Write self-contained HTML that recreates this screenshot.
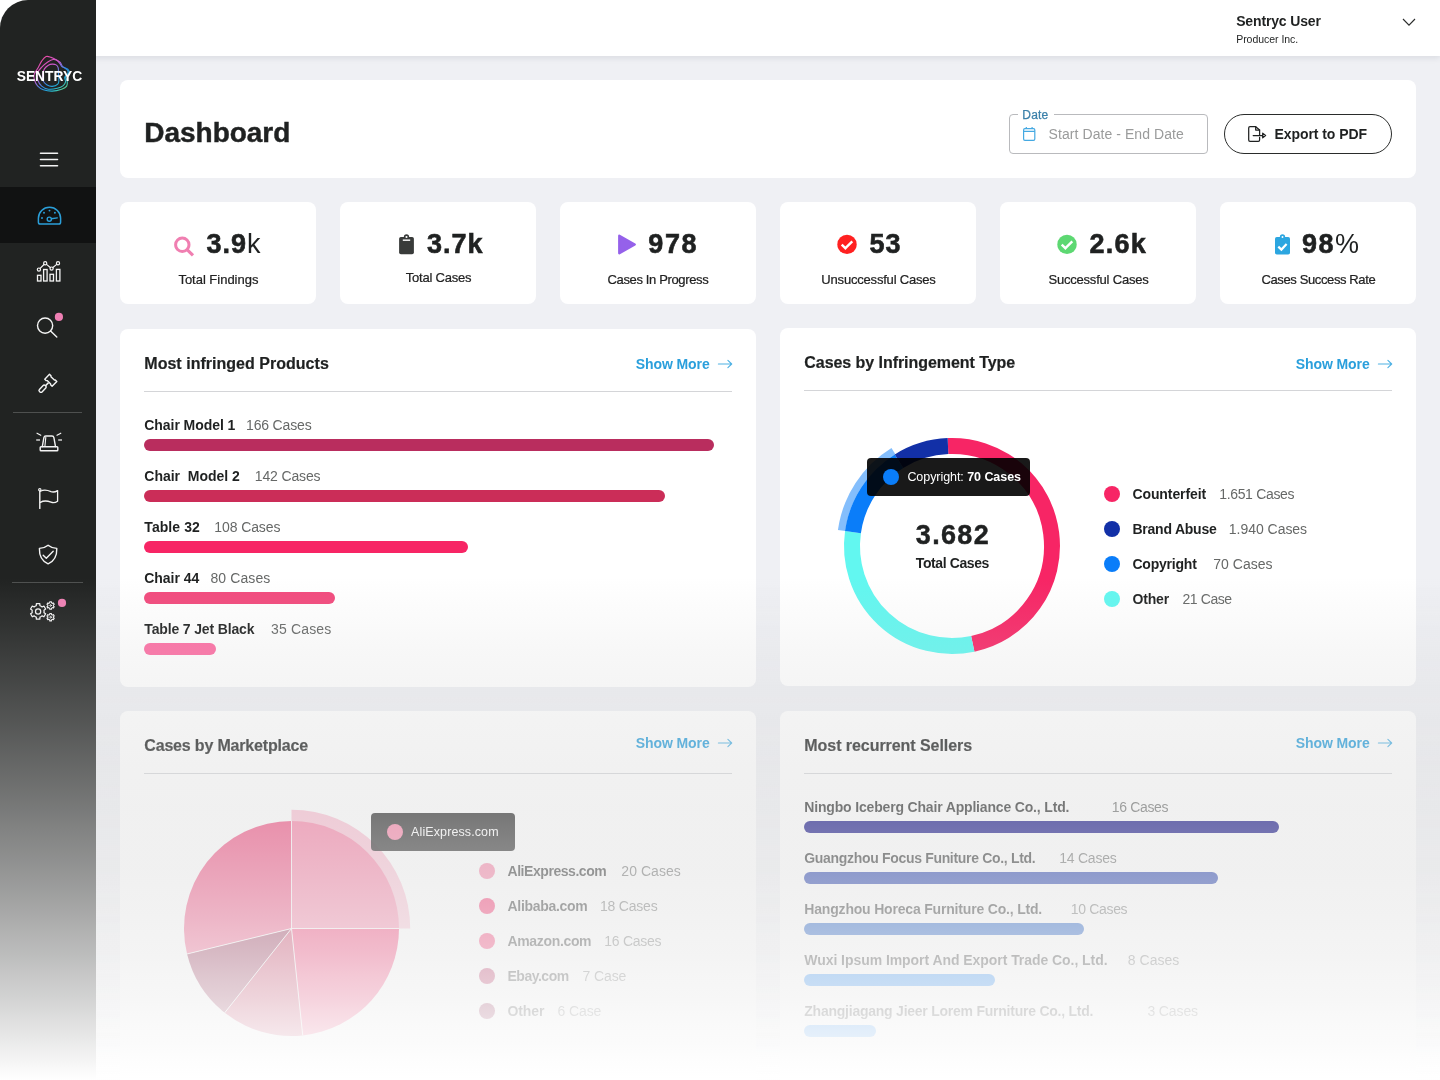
<!DOCTYPE html>
<html lang="en"><head><meta charset="utf-8"><title>Dashboard</title>
<style>
html,body{margin:0;padding:0}
body{width:1440px;height:1080px;overflow:hidden;position:relative;background:#eff0f4;font-family:"Liberation Sans",sans-serif;color:#1f2121}
.t{position:absolute;line-height:1;white-space:nowrap}
.b{position:absolute;box-sizing:border-box}
.card{background:#fff;border-radius:8px}
svg{position:absolute;overflow:visible}
b{font-weight:700}
.g{color:#6b6b6b;font-weight:400}
</style></head><body>
<div id="app" style="position:absolute;left:0;top:0;width:1440px;height:1080px;will-change:transform">

<div class="b" style="left:0px;top:0px;width:1440px;height:56px;background:#fff;box-shadow:0 2px 6px rgba(30,35,60,.10)"></div>
<div class="t" style="left:1236.2px;top:14.35px;font-size:14px;font-weight:700;color:#1f2121;letter-spacing:-0.157px;">Sentryc User</div>
<div class="t" style="left:1236.2px;top:34.11px;font-size:10.5px;font-weight:400;color:#1f2121;letter-spacing:-0.035px;">Producer Inc.</div>
<svg style="left:1402px;top:18px" width="14" height="9" viewBox="0 0 14 9"><path d="M1 1 L7 7.2 L13 1" fill="none" stroke="#2a2c2b" stroke-width="1.15"/></svg>
<div class="b" style="left:0px;top:0px;width:96px;height:1080px;background:#212322;border-top-left-radius:28px"></div>
<div class="b" style="left:0px;top:187px;width:96px;height:56px;background:#111212"></div>
<div class="b" style="left:13px;top:412px;width:69px;height:1px;background:#4e504f"></div>
<div class="b" style="left:12px;top:582px;width:71px;height:1px;background:#4e504f"></div>
<svg style="left:0;top:0" width="96" height="660" viewBox="0 0 96 660" fill="none" stroke-linecap="round" stroke-linejoin="round">
<defs><linearGradient id="lg" x1="38" y1="58" x2="64" y2="90" gradientUnits="userSpaceOnUse">
<stop offset="0" stop-color="#f0479c"/><stop offset=".38" stop-color="#c85ad0"/><stop offset=".62" stop-color="#2e8be6"/><stop offset=".82" stop-color="#20b5d8"/><stop offset="1" stop-color="#5fd08a"/></linearGradient></defs>
<path d="M46.11,56.56 C47.84,55.87 49.28,56.81 51.11,57.39 C52.94,57.97 54.43,58.79 56.11,59.72 C57.79,60.66 59.06,61.23 60.28,62.50 C61.50,63.77 61.40,65.44 62.78,66.67 C64.15,67.89 66.64,68.05 67.78,69.17 C68.92,70.29 69.41,71.40 69.00,72.78 C68.59,74.15 65.88,75.14 65.56,76.67 C65.23,78.19 67.02,79.38 67.22,81.11 C67.43,82.84 67.69,84.63 66.67,86.11 C65.65,87.59 64.31,88.25 61.67,89.17 C59.02,90.08 55.58,91.01 52.22,91.11 C48.86,91.21 45.98,90.64 43.33,89.72 C40.69,88.81 39.41,87.89 37.78,86.11 C36.15,84.33 35.11,82.14 34.44,80.00 C33.78,77.86 33.56,76.58 34.17,74.44 C34.78,72.31 36.40,70.78 37.78,68.33 C39.15,65.89 40.14,63.27 41.67,61.11 C43.19,58.95 44.38,57.24 46.11,56.56Z" stroke="url(#lg)" stroke-width="1.1" fill="none"/>
<path d="M53.06,59.44 C54.79,59.19 55.90,59.69 57.22,60.56 C58.55,61.42 59.41,63.05 60.28,64.17 C61.14,65.29 61.08,65.90 61.94,66.67 C62.81,67.43 63.93,67.62 65.00,68.33 C66.07,69.05 67.27,69.54 67.78,70.56 C68.29,71.57 68.34,72.67 67.78,73.89 C67.22,75.11 65.13,75.80 64.72,77.22 C64.31,78.65 65.81,80.14 65.56,81.67 C65.30,83.19 64.86,84.33 63.33,85.56 C61.81,86.78 59.97,87.67 57.22,88.33 C54.47,89.00 51.19,89.57 48.33,89.17 C45.48,88.76 43.60,87.79 41.67,86.11 C39.73,84.43 38.54,82.44 37.78,80.00 C37.01,77.56 36.69,75.22 37.50,72.78 C38.31,70.33 40.34,68.65 42.22,66.67 C44.11,64.68 45.79,63.27 47.78,61.94 C49.76,60.62 51.32,59.70 53.06,59.44Z" stroke="url(#lg)" stroke-width="1.1" fill="none"/>
<path d="M52.22,64.17 C53.65,64.10 55.01,64.23 56.11,64.89 C57.21,65.55 57.79,66.23 58.22,67.78 C58.65,69.33 58.32,71.09 58.44,73.33 C58.57,75.57 59.01,78.01 58.89,80.00 C58.77,81.99 59.00,83.00 57.78,84.17 C56.56,85.34 54.26,86.29 52.22,86.39 C50.19,86.49 48.30,85.69 46.67,84.72 C45.04,83.75 44.10,82.89 43.33,81.11 C42.57,79.33 42.30,77.24 42.50,75.00 C42.70,72.76 43.38,70.67 44.44,68.89 C45.51,67.11 46.91,66.14 48.33,65.28 C49.76,64.41 50.80,64.24 52.22,64.17Z" stroke="url(#lg)" stroke-width="1.1" fill="none"/>
<text x="16.7" y="80.8" font-family="Liberation Sans, sans-serif" font-weight="700" font-size="14.9" fill="#fff" stroke="none" textLength="65.5" lengthAdjust="spacingAndGlyphs">SENTRYC</text>
<path d="M40.5 153.2H57.5M40.5 159.5H57.5M40.5 165.8H57.5" stroke="#f4f4f4" stroke-width="1.6"/>
<path d="M40.2 224 H58.8 Q60.6 224 60.6 222.2 V218.3 A11.1 11.1 0 0 0 38.4 218.3 V222.2 Q38.4 224 40.2 224Z" stroke="#2b9fd9" stroke-width="1.5"/>
<circle cx="49.3" cy="219.2" r="2.1" stroke="#2b9fd9" stroke-width="1.4"/><path d="M51.4 218.8 L57.3 217.9" stroke="#2b9fd9" stroke-width="1.4"/>
<circle cx="42" cy="218" r="0.95" fill="#2b9fd9"/>
<circle cx="44" cy="212.7" r="0.95" fill="#2b9fd9"/>
<circle cx="49.5" cy="210.6" r="0.95" fill="#2b9fd9"/>
<circle cx="54.9" cy="212.7" r="0.95" fill="#2b9fd9"/>
<rect x="37.5" y="275.3" width="3.5" height="5.7" stroke="#f4f4f4" stroke-width="1.3" stroke-linejoin="miter"/>
<rect x="43.6" y="269.5" width="3.5" height="11.5" stroke="#f4f4f4" stroke-width="1.3" stroke-linejoin="miter"/>
<rect x="50.0" y="274.3" width="3.5" height="6.7" stroke="#f4f4f4" stroke-width="1.3" stroke-linejoin="miter"/>
<rect x="56.4" y="269.4" width="3.5" height="11.6" stroke="#f4f4f4" stroke-width="1.3" stroke-linejoin="miter"/>
<path d="M40.10 268.40L44.00 264.50" stroke="#f4f4f4" stroke-width="1.2"/>
<path d="M46.51 264.38L50.29 267.52" stroke="#f4f4f4" stroke-width="1.2"/>
<path d="M52.91 267.52L56.69 264.38" stroke="#f4f4f4" stroke-width="1.2"/>
<circle cx="38.9" cy="269.6" r="1.6" stroke="#f4f4f4" stroke-width="1.2"/>
<circle cx="45.2" cy="263.3" r="1.6" stroke="#f4f4f4" stroke-width="1.2"/>
<circle cx="51.6" cy="268.6" r="1.6" stroke="#f4f4f4" stroke-width="1.2"/>
<circle cx="58" cy="263.3" r="1.6" stroke="#f4f4f4" stroke-width="1.2"/>
<circle cx="45.1" cy="325.6" r="7.6" stroke="#f4f4f4" stroke-width="1.4"/><path d="M50.6 331 L56.8 337.1" stroke="#f4f4f4" stroke-width="1.4"/>
<circle cx="58.9" cy="316.9" r="4.1" fill="#ee7fb3"/>
<g transform="translate(39.4 392.1) rotate(-46)" stroke="#f4f4f4" stroke-width="1.4"><rect x="0.5" y="-1.8" width="8.2" height="3.6" rx="1.4"/><path d="M8.8 0 L13 0" stroke-width="1.7" stroke-linecap="butt"/><path d="M13.0 -5.1 L19.8 -5.1 L19.8 -3.0 L19.1 -2.4 L19.1 2.4 L19.8 3.0 L19.8 5.1 L13.0 5.1 L13.0 3.0 L13.7 2.4 L13.7 -2.4 L13.0 -3.0 Z"/></g>
<path d="M42.3 446.6 L43.9 437.6 Q44.2 436 45.8 436 H52 Q53.6 436 53.9 437.6 L55.5 446.6" stroke="#f4f4f4" stroke-width="1.4"/>
<rect x="40.2" y="446.7" width="17.6" height="4" rx="0.8" stroke="#f4f4f4" stroke-width="1.4"/>
<path d="M45.8 437.4 L44.9 446.4" stroke="#f4f4f4" stroke-width="1.1"/>
<path d="M37 433.2 L40.8 435.3 M60.8 433.2 L57 435.3" stroke="#f4f4f4" stroke-width="1.1"/>
<path d="M36.2 440 H40 M58.2 440 H62" stroke="#cfcfcf" stroke-width="1.6" stroke-linecap="butt"/>
<path d="M39.8 491 V508.4" stroke="#f4f4f4" stroke-width="1.4"/><circle cx="39.8" cy="489.8" r="1.2" stroke="#f4f4f4" stroke-width="1.1"/>
<path d="M40.4 491.2 C44 489.2 48 490.2 51 491.6 C53.5 492.6 55.6 491.8 57.6 490.6 V501.2 C55.6 502.6 53.5 503.2 51 502.2 C48 501 44 500.2 40.4 502.4" stroke="#f4f4f4" stroke-width="1.3"/>
<path d="M48.1 545.2 C45.5 547.4 42.4 548.2 39.4 548.4 C39.2 555.5 41.8 561 48.1 563.8 C54.4 561 57 555.5 56.8 548.4 C53.8 548.2 50.7 547.4 48.1 545.2Z" stroke="#f4f4f4" stroke-width="1.4"/>
<path d="M43.2 555.3 L46.3 558.3 L53.2 551.2" stroke="#f4f4f4" stroke-width="1.4"/>
<path d="M40.65,616.83 L39.95,617.11 L39.82,619.11 L36.38,619.11 L36.25,617.11 L35.55,616.83 L34.68,616.33 L34.09,615.86 L32.28,616.75 L30.56,613.76 L32.23,612.65 L32.12,611.90 L32.12,610.90 L32.23,610.15 L30.56,609.04 L32.28,606.05 L34.09,606.94 L34.68,606.47 L35.55,605.97 L36.25,605.69 L36.38,603.69 L39.82,603.69 L39.95,605.69 L40.65,605.97 L41.52,606.47 L42.11,606.94 L43.92,606.05 L45.64,609.04 L43.97,610.15 L44.08,610.90 L44.08,611.90 L43.97,612.65 L45.64,613.76 L43.92,616.75 L42.11,615.86 L41.52,616.33Z" stroke="#f4f4f4" stroke-width="1.25"/>
<circle cx="38.1" cy="611.4" r="2.6" stroke="#f4f4f4" stroke-width="1.25"/>
<path d="M51.79,608.03 L51.47,608.16 L51.43,609.21 L49.77,609.21 L49.73,608.16 L49.41,608.03 L49.00,607.80 L48.73,607.58 L47.80,608.07 L46.97,606.64 L47.86,606.08 L47.81,605.73 L47.81,605.27 L47.86,604.92 L46.97,604.36 L47.80,602.93 L48.73,603.42 L49.00,603.20 L49.41,602.97 L49.73,602.84 L49.77,601.79 L51.43,601.79 L51.47,602.84 L51.79,602.97 L52.20,603.20 L52.47,603.42 L53.40,602.93 L54.23,604.36 L53.34,604.92 L53.39,605.27 L53.39,605.73 L53.34,606.08 L54.23,606.64 L53.40,608.07 L52.47,607.58 L52.20,607.80Z" stroke="#f4f4f4" stroke-width="1.1"/>
<circle cx="50.6" cy="605.5" r="0.8" stroke="#f4f4f4" stroke-width="0.9"/>
<path d="M51.79,619.73 L51.47,619.86 L51.43,620.91 L49.77,620.91 L49.73,619.86 L49.41,619.73 L49.00,619.50 L48.73,619.28 L47.80,619.77 L46.97,618.34 L47.86,617.78 L47.81,617.43 L47.81,616.97 L47.86,616.62 L46.97,616.06 L47.80,614.63 L48.73,615.12 L49.00,614.90 L49.41,614.67 L49.73,614.54 L49.77,613.49 L51.43,613.49 L51.47,614.54 L51.79,614.67 L52.20,614.90 L52.47,615.12 L53.40,614.63 L54.23,616.06 L53.34,616.62 L53.39,616.97 L53.39,617.43 L53.34,617.78 L54.23,618.34 L53.40,619.77 L52.47,619.28 L52.20,619.50Z" stroke="#f4f4f4" stroke-width="1.1"/>
<circle cx="50.6" cy="617.2" r="0.8" stroke="#f4f4f4" stroke-width="0.9"/>
<circle cx="62" cy="602.9" r="4.1" fill="#ee7fb3"/>
</svg>
<div class="b card" style="left:120px;top:80px;width:1296px;height:98px"></div>
<div class="t" style="left:144.3px;top:118.50px;font-size:28px;font-weight:700;color:#1f2121;-webkit-text-stroke:.45px #1f2121;letter-spacing:-0.028px;">Dashboard</div>
<div class="b" style="left:1009px;top:114px;width:199px;height:40px;border:1px solid #b9babd;border-radius:4px"></div>
<div class="b" style="left:1018px;top:113px;width:36px;height:3px;background:#fff"></div>
<div class="t" style="left:1022.3px;top:109.14px;font-size:12px;font-weight:400;color:#3b80aa;-webkit-text-stroke:.25px #3b80aa;letter-spacing:0.213px;">Date</div>
<div class="t" style="left:1048.6px;top:127.15px;font-size:14px;font-weight:400;color:#9a9b9b;letter-spacing:0.069px;">Start Date - End Date</div>
<svg style="left:1020px;top:124px" width="20" height="20" viewBox="1020 124 20 20" fill="none" stroke="#45a9e2" stroke-width="1.2" stroke-linejoin="round"><rect x="1023.6" y="128.6" width="11.2" height="11.8" rx="1.3"/><path d="M1023.6 131.4H1034.8M1026.3 126.9V128.6M1032.1 126.9V128.6"/></svg>
<div class="b" style="left:1224px;top:114px;width:168px;height:40px;border:1px solid #2a2c2b;border-radius:20px"></div>
<div class="t" style="left:1274.4px;top:127.15px;font-size:14px;font-weight:700;color:#1f2121;letter-spacing:-0.057px;">Export to PDF</div>
<svg style="left:1244px;top:122px" width="26" height="24" viewBox="1244 122 26 24" fill="none" stroke="#1f2121" stroke-width="1.25" stroke-linejoin="round" stroke-linecap="round"><path d="M1259.6 135.2V130L1255.7 126.7H1250Q1248.7 126.7 1248.7 128V140Q1248.7 141.3 1250 141.3H1258.3Q1259.6 141.3 1259.6 140V137.4"/><path d="M1255.7 126.7V130H1259.6"/><path d="M1253.2 135.5H1262.5"/><path d="M1262.7 133.2L1265.6 135.5L1262.7 137.8Z"/></svg>
<div class="b card" style="left:120px;top:202px;width:196px;height:102px"></div>
<div class="b card" style="left:340px;top:202px;width:196px;height:102px"></div>
<div class="b card" style="left:560px;top:202px;width:196px;height:102px"></div>
<div class="b card" style="left:780px;top:202px;width:196px;height:102px"></div>
<div class="b card" style="left:1000px;top:202px;width:196px;height:102px"></div>
<div class="b card" style="left:1220px;top:202px;width:196px;height:102px"></div>
<svg style="left:170px;top:232px" width="28" height="28" viewBox="170 232 28 28" fill="none"><circle cx="182.3" cy="244.7" r="6.7" stroke="#f07fb1" stroke-width="3"/><path d="M187.3 249.8L193 255.3" stroke="#f07fb1" stroke-width="3.2"/></svg>
<div class="t" style="left:206.6px;top:231.14px;font-size:27px;font-weight:400;color:#1f2121;letter-spacing:0.992px"><b style="-webkit-text-stroke:.6px #1f2121">3.9</b>k</div>
<div class="t" style="left:118.4px;width:200px;text-align:center;top:273.00px;font-size:13px;color:#222;letter-spacing:-0.015px;-webkit-text-stroke:.22px #222">Total Findings</div>
<svg style="left:396px;top:232px" width="22" height="26" viewBox="396 232 22 26"><rect x="399.1" y="237" width="14.8" height="17.3" rx="1.8" fill="#393b3a"/><circle cx="406.5" cy="237" r="1.85" fill="#fff" stroke="#393b3a" stroke-width="1.6"/><rect x="402.8" y="239.4" width="7.4" height="1.6" fill="#e9e9e9"/></svg>
<div class="t" style="left:427.1px;top:231.04px;font-size:27px;font-weight:400;color:#1f2121;letter-spacing:0.988px"><b style="-webkit-text-stroke:.6px #1f2121">3.7k</b></div>
<div class="t" style="left:338.5px;width:200px;text-align:center;top:271.00px;font-size:13px;color:#222;letter-spacing:-0.229px;-webkit-text-stroke:.22px #222">Total Cases</div>
<svg style="left:614px;top:230px" width="26" height="30" viewBox="614 230 26 30"><path d="M619.3 235.8L634.7 244.5L619.3 253.2Z" fill="#9561ea" stroke="#9561ea" stroke-width="2.4" stroke-linejoin="round"/></svg>
<div class="t" style="left:648.3px;top:231.04px;font-size:27px;font-weight:400;color:#1f2121;letter-spacing:1.584px"><b style="-webkit-text-stroke:.6px #1f2121">978</b></div>
<div class="t" style="left:557.9px;width:200px;text-align:center;top:273.00px;font-size:13px;color:#222;letter-spacing:-0.361px;-webkit-text-stroke:.22px #222">Cases In Progress</div>
<svg style="left:835px;top:232px" width="24" height="24" viewBox="835 232 24 24"><circle cx="847" cy="244.4" r="9.7" fill="#ff2121"/><path d="M841.7 244.6L845.4 248.2L852.3 241.4" fill="none" stroke="#fff" stroke-width="2.4"/></svg>
<div class="t" style="left:869.5px;top:231.04px;font-size:27px;font-weight:400;color:#1f2121;letter-spacing:1.034px"><b style="-webkit-text-stroke:.6px #1f2121">53</b></div>
<div class="t" style="left:778.5px;width:200px;text-align:center;top:273.00px;font-size:13px;color:#222;letter-spacing:-0.193px;-webkit-text-stroke:.22px #222">Unsuccessful Cases</div>
<svg style="left:1055px;top:232px" width="24" height="24" viewBox="1055 232 24 24"><circle cx="1067" cy="244.4" r="9.7" fill="#5dd872"/><path d="M1061.7 244.6L1065.4 248.2L1072.3 241.4" fill="none" stroke="#fff" stroke-width="2.4"/></svg>
<div class="t" style="left:1089.5px;top:231.04px;font-size:27px;font-weight:400;color:#1f2121;letter-spacing:1.263px"><b style="-webkit-text-stroke:.6px #1f2121">2.6k</b></div>
<div class="t" style="left:998.5px;width:200px;text-align:center;top:273.00px;font-size:13px;color:#222;letter-spacing:-0.202px;-webkit-text-stroke:.22px #222">Successful Cases</div>
<svg style="left:1272px;top:232px" width="22" height="26" viewBox="1272 232 22 26"><rect x="1275" y="237" width="15" height="17.6" rx="1.8" fill="#2ca6e0"/><circle cx="1282.5" cy="237" r="1.8" fill="#fff" stroke="#2ca6e0" stroke-width="1.7"/><path d="M1278.3 246.6L1281.4 249.6L1286.6 244.1" fill="none" stroke="#fff" stroke-width="2.2"/></svg>
<div class="t" style="left:1302px;top:231.04px;font-size:27px;font-weight:400;color:#1f2121;letter-spacing:1.520px"><b style="-webkit-text-stroke:.6px #1f2121">98</b>%</div>
<div class="t" style="left:1218.4px;width:200px;text-align:center;top:273.00px;font-size:13px;color:#222;letter-spacing:-0.381px;-webkit-text-stroke:.22px #222">Cases Success Rate</div>
<div class="b card" style="left:120px;top:329px;width:636px;height:358px"></div>
<div class="b" style="left:144px;top:391px;width:588px;height:1px;background:#d4d5d8"></div>
<div class="b card" style="left:780px;top:328px;width:636px;height:358px"></div>
<div class="b" style="left:804px;top:390px;width:588px;height:1px;background:#d4d5d8"></div>
<div class="b card" style="left:120px;top:711px;width:636px;height:400px"></div>
<div class="b" style="left:144px;top:773px;width:588px;height:1px;background:#d4d5d8"></div>
<div class="b card" style="left:780px;top:711px;width:636px;height:400px"></div>
<div class="b" style="left:804px;top:773px;width:588px;height:1px;background:#d4d5d8"></div>
<div class="t" style="left:144.3px;top:355.86px;font-size:16px;font-weight:700;color:#1f2121;-webkit-text-stroke:.2px #1f2121;letter-spacing:0.022px;">Most infringed Products</div>
<div class="t" style="left:635.8000000000001px;top:356.75px;font-size:14px;font-weight:700;color:#2a9fdc;letter-spacing:-0.097px;">Show More</div>
<svg style="left:715.6px;top:357.8px" width="18" height="12" viewBox="0 0 18 12" fill="none" stroke="#4fb2e4" stroke-width="1.15" stroke-linecap="round" stroke-linejoin="round"><path d="M2.4 6H15.6M11.9 2.4L15.7 6L11.9 9.6"/></svg>
<div class="t" style="left:144.3px;top:418.15px;font-size:14px;font-weight:700;color:#1f2121;letter-spacing:-0.062px;">Chair Model 1</div>
<div class="t" style="left:246px;top:418.15px;font-size:14px;font-weight:400;color:#666867;letter-spacing:-0.160px;">166 Cases</div>
<div class="b" style="left:144px;top:439px;width:570px;height:12px;background:#b92d5e;border-radius:6px"></div>
<div class="t" style="left:144.3px;top:469.15px;font-size:14px;font-weight:700;color:#1f2121;letter-spacing:-0.007px;">Chair&nbsp; Model 2</div>
<div class="t" style="left:254.8px;top:469.15px;font-size:14px;font-weight:400;color:#666867;letter-spacing:-0.149px;">142 Cases</div>
<div class="b" style="left:144px;top:490px;width:521px;height:12px;background:#cb2d58;border-radius:6px"></div>
<div class="t" style="left:144.3px;top:520.15px;font-size:14px;font-weight:700;color:#1f2121;letter-spacing:0.075px;">Table 32</div>
<div class="t" style="left:214.3px;top:520.15px;font-size:14px;font-weight:400;color:#666867;letter-spacing:-0.104px;">108 Cases</div>
<div class="b" style="left:144px;top:541px;width:324px;height:12px;background:#f72565;border-radius:6px"></div>
<div class="t" style="left:144.3px;top:571.15px;font-size:14px;font-weight:700;color:#1f2121;letter-spacing:-0.044px;">Chair 44</div>
<div class="t" style="left:210.4px;top:571.15px;font-size:14px;font-weight:400;color:#666867;letter-spacing:0.106px;">80 Cases</div>
<div class="b" style="left:144px;top:592px;width:191px;height:12px;background:#f24a7d;border-radius:6px"></div>
<div class="t" style="left:144.3px;top:622.15px;font-size:14px;font-weight:700;color:#1f2121;letter-spacing:-0.152px;">Table 7 Jet Black</div>
<div class="t" style="left:271px;top:622.15px;font-size:14px;font-weight:400;color:#666867;letter-spacing:0.169px;">35 Cases</div>
<div class="b" style="left:144px;top:643px;width:72px;height:12px;background:#fd6da3;border-radius:6px"></div>
<div class="t" style="left:804.3px;top:354.86px;font-size:16px;font-weight:700;color:#1f2121;-webkit-text-stroke:.2px #1f2121;letter-spacing:-0.054px;">Cases by Infringement Type</div>
<div class="t" style="left:1295.8px;top:356.75px;font-size:14px;font-weight:700;color:#2a9fdc;letter-spacing:-0.097px;">Show More</div>
<svg style="left:1375.6px;top:357.8px" width="18" height="12" viewBox="0 0 18 12" fill="none" stroke="#4fb2e4" stroke-width="1.15" stroke-linecap="round" stroke-linejoin="round"><path d="M2.4 6H15.6M11.9 2.4L15.7 6L11.9 9.6"/></svg>
<svg style="left:0;top:0" width="1440" height="1080" viewBox="0 0 1440 1080">
<path d="M947.99 446.08A100 100 0 0 1 972.79 643.81" fill="none" stroke="#f72565" stroke-width="16" opacity="1"/>
<path d="M972.79 643.81A100 100 0 0 1 852.97 532.08" fill="none" stroke="#62f7f0" stroke-width="16" opacity="1"/>
<path d="M852.97 532.08A100 100 0 0 1 899.01 461.20" fill="none" stroke="#0a7df9" stroke-width="16" opacity="1"/>
<path d="M899.01 461.20A100 100 0 0 1 947.99 446.08" fill="none" stroke="#1230a7" stroke-width="16" opacity="1"/>
<path d="M841.59 530.48A111.5 111.5 0 0 1 893.41 451.13" fill="none" stroke="#0a7df9" stroke-width="7.4" opacity="0.5"/>
</svg>
<div class="t" style="left:915.8px;top:522.34px;font-size:27px;font-weight:700;color:#1f2121;-webkit-text-stroke:.45px #1f2121;letter-spacing:1.327px;">3.682</div>
<div class="t" style="left:915.8px;top:555.95px;font-size:14px;font-weight:700;color:#1f2121;letter-spacing:-0.396px;">Total Cases</div>
<div class="b" style="left:867px;top:458px;width:163px;height:38px;background:rgba(0,0,0,.9);border-radius:4px"></div>
<div class="b" style="left:882.8px;top:468.8px;width:16.4px;height:16.4px;background:#0a7df9;border-radius:50%"></div>
<div class="t" style="left:907.4px;top:470.62px;font-size:12.5px;font-weight:400;color:#fff;letter-spacing:-.06px">Copyright: <b>70 Cases</b></div>
<div class="b" style="left:1104px;top:485.8px;width:16px;height:16px;background:#f72565;border-radius:50%"></div>
<div class="t" style="left:1132.4px;top:486.85px;font-size:14px;font-weight:700;color:#1f2121;letter-spacing:-0.088px;">Counterfeit</div>
<div class="t" style="left:1219.2px;top:486.85px;font-size:14px;font-weight:400;color:#666867;letter-spacing:-0.329px;">1.651 Cases</div>
<div class="b" style="left:1104px;top:520.8px;width:16px;height:16px;background:#1230a7;border-radius:50%"></div>
<div class="t" style="left:1132.4px;top:521.85px;font-size:14px;font-weight:700;color:#1f2121;letter-spacing:-0.220px;">Brand Abuse</div>
<div class="t" style="left:1228.8px;top:521.85px;font-size:14px;font-weight:400;color:#666867;letter-spacing:-0.029px;">1.940 Cases</div>
<div class="b" style="left:1104px;top:555.8px;width:16px;height:16px;background:#0a7df9;border-radius:50%"></div>
<div class="t" style="left:1132.4px;top:556.85px;font-size:14px;font-weight:700;color:#1f2121;letter-spacing:-0.212px;">Copyright</div>
<div class="t" style="left:1213.3px;top:556.85px;font-size:14px;font-weight:400;color:#666867;letter-spacing:0.006px;">70 Cases</div>
<div class="b" style="left:1104px;top:590.8px;width:16px;height:16px;background:#62f7f0;border-radius:50%"></div>
<div class="t" style="left:1132.4px;top:591.85px;font-size:14px;font-weight:700;color:#1f2121;letter-spacing:-0.128px;">Other</div>
<div class="t" style="left:1182.5px;top:591.85px;font-size:14px;font-weight:400;color:#666867;letter-spacing:-0.421px;">21 Case</div>
<div class="t" style="left:144.3px;top:738.06px;font-size:16px;font-weight:700;color:#1f2121;-webkit-text-stroke:.2px #1f2121;letter-spacing:-0.180px;">Cases by Marketplace</div>
<div class="t" style="left:635.8000000000001px;top:735.65px;font-size:14px;font-weight:700;color:#2a9fdc;letter-spacing:-0.097px;">Show More</div>
<svg style="left:715.6px;top:736.7px" width="18" height="12" viewBox="0 0 18 12" fill="none" stroke="#4fb2e4" stroke-width="1.15" stroke-linecap="round" stroke-linejoin="round"><path d="M2.4 6H15.6M11.9 2.4L15.7 6L11.9 9.6"/></svg>
<svg style="left:0;top:0" width="1440" height="1080" viewBox="0 0 1440 1080">
<path d="M291.5 928.5L291.50 809.80A118.7 118.7 0 0 1 410.20 928.50Z" fill="#f8779f" opacity="0.5" />
<path d="M291.5 928.5L291.50 821.00A107.5 107.5 0 0 1 399.00 928.50Z" fill="#f8779f" opacity="1" />
<path d="M291.5 928.5L399.00 928.50A107.5 107.5 0 0 1 302.74 1035.41Z" fill="#f72565" opacity="1" />
<path d="M291.5 928.5L302.74 1035.41A107.5 107.5 0 0 1 224.73 1012.75Z" fill="#cb2d58" opacity="1" />
<path d="M291.5 928.5L224.73 1012.75A107.5 107.5 0 0 1 187.06 953.96Z" fill="#8f1c45" opacity="1" />
<path d="M291.5 928.5L187.06 953.96A107.5 107.5 0 0 1 291.50 821.00Z" fill="#f0457a" opacity="1" />
<path d="M291.5 928.5L291.50 821.00M291.5 928.5L399.00 928.50M291.5 928.5L302.74 1035.41M291.5 928.5L224.73 1012.75M291.5 928.5L187.06 953.96" stroke="#fff" stroke-width="1" fill="none" opacity=".9"/>
</svg>
<div class="b" style="left:371px;top:813px;width:144px;height:38px;background:rgba(0,0,0,.9);border-radius:4px"></div>
<div class="b" style="left:386.8px;top:823.8px;width:16.4px;height:16.4px;background:#f8779f;border-radius:50%"></div>
<div class="t" style="left:411.1px;top:825.62px;font-size:12.5px;font-weight:400;color:#fff;letter-spacing:0.105px;">AliExpress.com</div>
<div class="b" style="left:479px;top:863px;width:16px;height:16px;background:#f8779f;border-radius:50%"></div>
<div class="t" style="left:507.5px;top:863.95px;font-size:14px;font-weight:700;color:#1f2121;letter-spacing:-0.447px;">AliExpress.com</div>
<div class="t" style="left:621.3px;top:863.95px;font-size:14px;font-weight:400;color:#666867;letter-spacing:0.044px;">20 Cases</div>
<div class="b" style="left:479px;top:898px;width:16px;height:16px;background:#f72565;border-radius:50%"></div>
<div class="t" style="left:507.5px;top:898.95px;font-size:14px;font-weight:700;color:#1f2121;letter-spacing:-0.296px;">Alibaba.com</div>
<div class="t" style="left:600px;top:898.95px;font-size:14px;font-weight:400;color:#666867;letter-spacing:-0.206px;">18 Cases</div>
<div class="b" style="left:479px;top:933px;width:16px;height:16px;background:#f72565;border-radius:50%"></div>
<div class="t" style="left:507.5px;top:933.95px;font-size:14px;font-weight:700;color:#1f2121;letter-spacing:-0.343px;">Amazon.com</div>
<div class="t" style="left:604.2px;top:933.95px;font-size:14px;font-weight:400;color:#666867;letter-spacing:-0.244px;">16 Cases</div>
<div class="b" style="left:479px;top:968px;width:16px;height:16px;background:#b3114a;border-radius:50%"></div>
<div class="t" style="left:507.5px;top:968.95px;font-size:14px;font-weight:700;color:#1f2121;letter-spacing:-0.488px;">Ebay.com</div>
<div class="t" style="left:582.5px;top:968.95px;font-size:14px;font-weight:400;color:#666867;letter-spacing:-0.111px;">7 Case</div>
<div class="b" style="left:479px;top:1003px;width:16px;height:16px;background:#8a1040;border-radius:50%"></div>
<div class="t" style="left:507.5px;top:1003.95px;font-size:14px;font-weight:700;color:#1f2121;letter-spacing:-0.128px;">Other</div>
<div class="t" style="left:557.5px;top:1003.95px;font-size:14px;font-weight:400;color:#666867;letter-spacing:-0.111px;">6 Case</div>
<div class="t" style="left:804.3px;top:738.06px;font-size:16px;font-weight:700;color:#1f2121;-webkit-text-stroke:.2px #1f2121;letter-spacing:-0.052px;">Most recurrent Sellers</div>
<div class="t" style="left:1295.8px;top:735.65px;font-size:14px;font-weight:700;color:#2a9fdc;letter-spacing:-0.097px;">Show More</div>
<svg style="left:1375.6px;top:736.7px" width="18" height="12" viewBox="0 0 18 12" fill="none" stroke="#4fb2e4" stroke-width="1.15" stroke-linecap="round" stroke-linejoin="round"><path d="M2.4 6H15.6M11.9 2.4L15.7 6L11.9 9.6"/></svg>
<div class="t" style="left:804.3px;top:799.95px;font-size:14px;font-weight:700;color:#1f2121;letter-spacing:-0.169px;">Ningbo Iceberg Chair Appliance Co., Ltd.</div>
<div class="t" style="left:1111.8px;top:799.95px;font-size:14px;font-weight:400;color:#666867;letter-spacing:-0.344px;">16 Cases</div>
<div class="b" style="left:804px;top:821px;width:475px;height:12px;background:#02007e;border-radius:6px"></div>
<div class="t" style="left:804.3px;top:850.95px;font-size:14px;font-weight:700;color:#1f2121;letter-spacing:-0.320px;">Guangzhou Focus Funiture Co., Ltd.</div>
<div class="t" style="left:1059.2px;top:850.95px;font-size:14px;font-weight:400;color:#666867;letter-spacing:-0.231px;">14 Cases</div>
<div class="b" style="left:804px;top:872px;width:414px;height:12px;background:#1230a7;border-radius:6px"></div>
<div class="t" style="left:804.3px;top:901.95px;font-size:14px;font-weight:700;color:#1f2121;letter-spacing:-0.184px;">Hangzhou Horeca Furniture Co., Ltd.</div>
<div class="t" style="left:1070.7px;top:901.95px;font-size:14px;font-weight:400;color:#666867;letter-spacing:-0.319px;">10 Cases</div>
<div class="b" style="left:804px;top:923px;width:280px;height:12px;background:#054bc0;border-radius:6px"></div>
<div class="t" style="left:804.3px;top:952.95px;font-size:14px;font-weight:700;color:#1f2121;letter-spacing:-0.055px;">Wuxi Ipsum Import And Export Trade Co., Ltd.</div>
<div class="t" style="left:1127.8px;top:952.95px;font-size:14px;font-weight:400;color:#666867;letter-spacing:0.020px;">8 Cases</div>
<div class="b" style="left:804px;top:974px;width:191px;height:12px;background:#0a7df9;border-radius:6px"></div>
<div class="t" style="left:804.3px;top:1003.95px;font-size:14px;font-weight:700;color:#1f2121;letter-spacing:-0.239px;">Zhangjiagang Jieer Lorem Furniture Co., Ltd.</div>
<div class="t" style="left:1147.4px;top:1003.95px;font-size:14px;font-weight:400;color:#666867;letter-spacing:-0.109px;">3 Cases</div>
<div class="b" style="left:804px;top:1025px;width:72px;height:12px;background:#0a84ff;border-radius:6px"></div>
<div class="b" style="left:0;top:578px;width:1440px;height:502px;background:linear-gradient(180deg,rgba(196,196,196,0.000) 0.00%,rgba(198,198,198,0.042) 4.17%,rgba(201,201,201,0.083) 8.33%,rgba(203,203,203,0.125) 12.50%,rgba(206,206,206,0.167) 16.67%,rgba(208,208,208,0.208) 20.83%,rgba(211,211,211,0.250) 25.00%,rgba(213,213,213,0.292) 29.17%,rgba(216,216,216,0.333) 33.33%,rgba(218,218,218,0.375) 37.50%,rgba(221,221,221,0.417) 41.67%,rgba(223,223,223,0.458) 45.83%,rgba(226,226,226,0.500) 50.00%,rgba(228,228,228,0.542) 54.17%,rgba(230,230,230,0.583) 58.33%,rgba(233,233,233,0.625) 62.50%,rgba(235,235,235,0.667) 66.67%,rgba(238,238,238,0.708) 70.83%,rgba(240,240,240,0.750) 75.00%,rgba(243,243,243,0.792) 79.17%,rgba(245,245,245,0.833) 83.33%,rgba(248,248,248,0.875) 87.50%,rgba(250,250,250,0.917) 91.67%,rgba(253,253,253,0.958) 95.83%,rgba(255,255,255,1.000) 100.00%)"></div>
</div></body></html>
